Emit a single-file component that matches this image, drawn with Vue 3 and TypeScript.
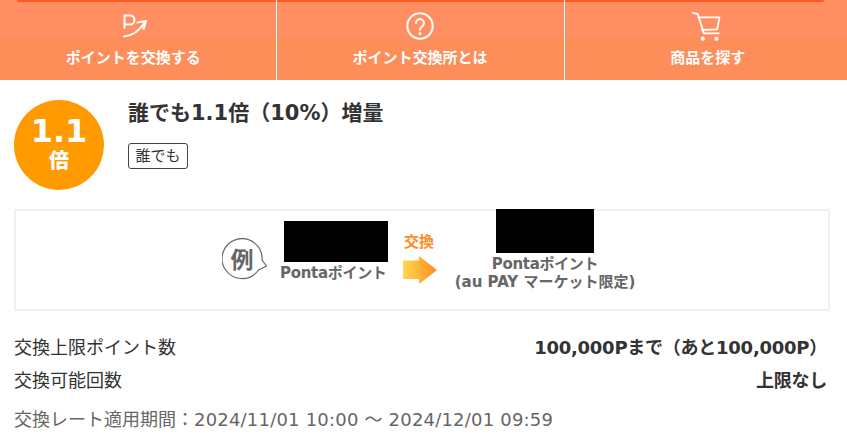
<script setup lang="ts">
const rows = [
  { label: '交換上限ポイント数', value: '100,000Pまで（あと100,000P）' },
  { label: '交換可能回数', value: '上限なし' },
]
</script>

<template>
  <div class="page">
    <nav class="nav">
      <div class="topline"></div>
      <a class="navitem first">
        <svg class="icon" viewBox="0 0 30 30" width="30" height="30" fill="none" stroke="#fff" stroke-width="2" stroke-linecap="round" stroke-linejoin="round">
          <path d="M1.500 16V3.500H7a4.500 4.500 0 0 1 0 9H1.500" />
          <path d="M1 24.500C9 24 17 18 22.500 9.500" />
          <path d="M14.500 10.500L23 9l-2.500 8" />
        </svg>
        <span>ポイントを交換する</span>
      </a>
      <a class="navitem">
        <svg class="icon" viewBox="0 0 30 30" width="30" height="30" fill="none" stroke="#fff" stroke-width="2" stroke-linecap="round">
          <circle cx="15" cy="14" r="12.700" />
          <path d="M11 11a4 4 0 1 1 6.200 3.400c-1.500 1-2.200 1.800-2.200 3.400" />
          <circle cx="15" cy="21.500" r=".6" fill="#fff" />
        </svg>
        <span>ポイント交換所とは</span>
      </a>
      <a class="navitem last">
        <svg class="icon" viewBox="0 0 30 30" width="30" height="30" fill="none" stroke="#fff" stroke-width="1.800" stroke-linecap="round" stroke-linejoin="round">
          <path d="M1.800 .8L6.800 2l6 19.300h15" />
          <path d="M7.500 5.300h21l-2.300 12L11 18" />
          <circle cx="11.800" cy="26.700" r="1.200" fill="#fff" />
          <circle cx="25.500" cy="26.700" r="1.200" fill="#fff" />
        </svg>
        <span>商品を探す</span>
      </a>
    </nav>

    <main class="content">
      <section class="head">
        <div class="badge">
          <strong>1.1</strong>
          <b>倍</b>
        </div>
        <div class="headtext">
          <h1>誰でも1.1倍（10%）増量</h1>
          <span class="tag">誰でも</span>
        </div>
      </section>

      <section class="example">
        <div class="rei">
          <svg viewBox="0 0 46 42" width="46" height="42">
            <path d="M36.500 32A20 20 0 1 1 40 22L44.500 28Z" fill="#fff" stroke="#666" stroke-width="1.200" stroke-linejoin="round" />
          </svg>
          <span class="reitext">例</span>
        </div>
        <div class="from">
          <div class="mask mask-a"></div>
          <div class="pname"><span class="pt">Pontaポイント</span></div>
        </div>
        <div class="arrowbox">
          <span class="swap">交換</span>
          <svg viewBox="0 0 34 28" width="34" height="28">
            <defs>
              <linearGradient id="ag" x1="0" x2="1" y1="0" y2="0">
                <stop offset="0" stop-color="#ffd84f" />
                <stop offset="1" stop-color="#ff8a1e" />
              </linearGradient>
            </defs>
            <path d="M0 4.500H16V0L34 14 16 28V23H0Z" fill="url(#ag)" />
          </svg>
        </div>
        <div class="to">
          <div class="mask mask-b"></div>
          <div class="pname"><span class="pt">Pontaポイント</span><br />(au PAY マーケット限定)</div>
        </div>
      </section>

      <dl class="rows">
        <div v-for="r in rows" :key="r.label" class="row">
          <dt>{{ r.label }}</dt>
          <dd>{{ r.value }}</dd>
        </div>
      </dl>

      <p class="period">交換レート適用期間：<span class="date">2024/11/01 10:00 ～ 2024/12/01 09:59</span></p>
    </main>
  </div>
</template>

<style>
html, body { margin: 0; background: #fff; }
</style>

<style scoped>
.page {
  width: 847px;
  height: 437px;
  overflow: hidden;
  font-family: "DejaVu Sans", "Noto Sans CJK JP", sans-serif;
  color: #333;
}
.nav {
  position: relative;
  display: grid;
  grid-template-columns: 276.500px 288px 282.500px;
  height: 80px;
  background: linear-gradient(#ff8f63 0, #ff8f63 37px, #fd8d59 37px, #fd8d59 100%);
}
.topline {
  position: absolute;
  top: 0;
  left: 17px;
  right: 23px;
  height: 1.500px;
  background: #ff5a1f;
  border-radius: 0 0 2px 2px;
}
.navitem {
  position: relative;
  display: flex;
  flex-direction: column;
  align-items: center;
  padding-top: 12px;
  color: #fff;
  font-size: 15px;
  font-weight: 700;
  line-height: 20px;
  border-right: 1.500px solid #fff;
}
.navitem.first span { margin-right: 9px; }
.navitem.last { border-right: 0; }
.navitem.last span { margin-left: 4px; }
.icon { display: block; margin-bottom: 6px; }
.content { padding: 0 14px; }
.head {
  display: flex;
  gap: 24px;
  padding-top: 20px;
  height: 109px;
}
.badge {
  width: 90px;
  height: 90px;
  border-radius: 50%;
  background: #ff9b00;
  color: #fff;
  display: flex;
  flex-direction: column;
  align-items: center;
  justify-content: center;
  font-weight: 700;
}
.badge strong { font-size: 32px; line-height: 36px; margin-top: -4px; }
.badge b { font-size: 20px; line-height: 24px; }
h1 {
  margin: 0;
  font-size: 21px;
  line-height: 26px;
  font-weight: 700;
  color: #333;
}
.tag {
  display: inline-block;
  margin-top: 17px;
  padding: 0 6.500px;
  border: 1px solid #444;
  border-radius: 3px;
  font-size: 15px;
  line-height: 24px;
  font-weight: 400;
}
.example {
  box-sizing: border-box;
  height: 102px;
  width: 816px;
  border: 2px solid #f0f0f0;
  display: flex;
  align-items: flex-start;
  padding-left: 206px;
}
.rei { position: relative; width: 46px; height: 42px; margin-top: 27px; margin-right: 12px; }
.rei svg { display: block; }
.reitext {
  position: absolute;
  left: 0;
  top: 0;
  width: 40px;
  line-height: 41px;
  text-align: center;
  font-size: 23px;
  color: #666;
  font-weight: 700;
  font-family: "Noto Sans CJK JP", sans-serif;
}
.from { display: flex; flex-direction: column; align-items: flex-start; margin-top: 10px; width: 108px; }
.to { display: flex; flex-direction: column; align-items: center; margin-top: -2px; margin-left: 17px; width: 182px; }
.mask { background: #000; }
.mask-a { width: 104px; height: 41px; margin-left: 4px; }
.mask-b { width: 98px; height: 44px; }
.pname {
  color: #666;
  font-size: 15px;
  line-height: 18px;
  font-weight: 700;
  text-align: center;
  white-space: nowrap;
}
.pt { letter-spacing: -0.3px; }
.from .pname { margin-top: 2px; }
.to .pname { margin-top: 2px; }
.arrowbox { display: flex; flex-direction: column; align-items: center; margin-left: 15px; margin-top: 21px; }
.swap { color: #ff8a1e; font-size: 15px; font-weight: 700; line-height: 20px; margin-bottom: 4px; margin-right: 2px; }
.rows { margin: 20px 0 0; }
.row {
  display: flex;
  justify-content: space-between;
  font-size: 18px;
  line-height: 33px;
  padding-right: 6px;
}
dd { margin: 0; font-weight: 700; letter-spacing: -0.25px; }
dt { font-weight: 400; }
.period { margin: 11px 0 0; font-size: 18px; line-height: 24px; color: #666; }
.date { letter-spacing: 0.2px; }
</style>
